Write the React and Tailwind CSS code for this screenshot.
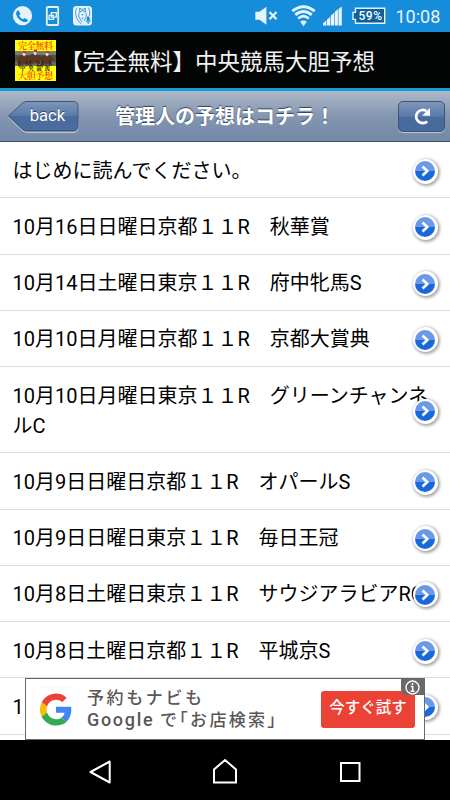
const races = [
  'はじめに読んでください。',
  '10月16日日曜日京都１１R　秋華賞',
  '10月14日土曜日東京１１R　府中牝馬S',
  '10月10日月曜日京都１１R　京都大賞典',
  '10月10日月曜日東京１１R　グリーンチャンネルC',
  '10月9日日曜日京都１１R　オパールS',
  '10月9日日曜日東京１１R　毎日王冠',
  '10月8日土曜日東京１１R　サウジアラビアRC',
  '10月8日土曜日京都１１R　平城京S',
  '1',
]

function StatusBar() {
  return (
    <div className="flex h-8 shrink-0 items-center bg-[#158ddb] text-[#e6f3fb]">
      <svg width="100" height="32" viewBox="0 0 100 32" fill="none">
        <circle cx="22.5" cy="15.7" r="9.6" fill="currentColor" />
        <path d="M18.3 10.2l2.2 3.6-1.3 1.6c.7 1.8 2 3 3.8 3.8l1.6-1.3 3.4 2c-.6 2-2.3 2.6-4.3 2-4-1.2-6.6-4-7.5-7.4-.4-2 .4-3.8 2.1-4.3z" fill="#158ddb" />
        <rect x="46.8" y="7" width="11.4" height="18" rx="1" stroke="currentColor" strokeWidth="1.8" />
        <path d="M51.3 12.7h5v4.5h-5zM49 15.3h4.5v4H49z" stroke="currentColor" strokeWidth="1.3" />
        <rect x="73" y="6" width="19" height="19.5" rx="3.5" fill="currentColor" />
        <path d="M76.8 7.5c-2.4 5-1.4 11 4.7 16.8M79.2 12.5l-.6 3.5 3.4 6.5M88.2 7.5c2 3 2 6 1 8.5M85.8 12.5l.6 3.5-2.4 5" stroke="#158ddb" strokeWidth=".8" />
        <path d="M79.7 8.2l2.8 1.5 2.8-1.5v3.8l-2.8-1.5-2.8 1.5z" stroke="#158ddb" strokeWidth=".9" />
        <path d="M82.5 14v1.3M82.5 17.5v1.3" stroke="#158ddb" strokeWidth="1.4" />
        <rect x="86.7" y="16.5" width="3" height="5" rx="1.2" fill="#158ddb" />
        <path d="M86 20.5c.6 2.8 4 2.8 4.5 0M88.2 22v2" stroke="#158ddb" strokeWidth=".9" />
      </svg>
      <svg className="ml-[150px]" width="136" height="32" viewBox="250 0 136 32" fill="none">
        <path d="M255.3 11.8h4.2l6.9-5v18l-6.9-5h-4.2z" fill="currentColor" />
        <path d="M269.5 12l7 7.3M276.5 12l-7 7.3" stroke="currentColor" strokeWidth="2.2" />
        <path d="M292.3 11.2q11.2-8.8 22.4 0" stroke="currentColor" strokeWidth="2.9" />
        <path d="M295.3 14.9q8.2-6.8 16.4 0" stroke="currentColor" strokeWidth="2.8" />
        <path d="M298.2 18.5q5.3-4.6 10.6 0" stroke="currentColor" strokeWidth="2.6" />
        <path d="M300.2 21.8q3.3-2.7 6.6 0l-3.3 4.4z" fill="currentColor" />
        <path d="M323 25.5v-2.2l3.2-2.7v4.9zM326.8 25.5v-5.8l3.3-2.8v8.6zM330.7 25.5v-9.7l3.3-2.8v12.5zM334.6 25.5V12l3.3-2.7v16.2zM338.5 25.5V9l3.3-2.6v19.1z" fill="currentColor" />
        <path d="M355.5 8.2h29.2v15h-29.2v-3.8H353v-7h2.5z" fill="#0e619a" stroke="currentColor" strokeWidth="1.4" />
        <text x="358.5" y="20.2" fill="white" fontFamily="Roboto" fontSize="12" fontWeight="500" textLength="23.5">59%</text>
      </svg>
      <span className="ml-[9.5px] text-[18px] font-normal">10:08</span>
    </div>
  )
}

// Launcher artwork: yellow captions above and below the horses
function AppIcon() {
  return (
    <svg width="41" height="41" viewBox="0 0 41 41">
      <rect width="41" height="41" fill="#ffff0c" />
      <rect y="11" width="41" height="15" fill="#52523f" />
      <path d="M0 11h41v4H0z" fill="#777c70" />
      <path d="M0 22h41v4H0z" fill="#60745d" />
      {[2, 13, 25].map((x, i) => (
        <g key={x} transform={`translate(${x} ${i === 1 ? 0 : 1})`}>
          <path d="M0 17l4-3 7 1 3 3-3 4-1 4-2-3-4 1-2 3-1-6z" fill="#5a3626" />
          <path d="M5 13l2-1.5 2 2-2 2z" fill="#d7dedb" />
          <path d="M6 10h3v2H6z" fill="#e8281d" />
          <path d="M3 20l-2 4M9 20l3 4" stroke="#241713" />
        </g>
      ))}
      <g fontFamily="'Noto Serif CJK JP', 'Noto Sans CJK JP', serif">
        <text x="3" y="9.2" fontSize="9" fontWeight="500" fill="#f72608" textLength="35">完全無料</text>
        <text x="5" y="30.2" fontSize="5.5" fontWeight="700" fill="#191900" textLength="30">中央競馬</text>
        <text x="3" y="38.7" fontSize="9" fontWeight="500" fill="#f72608" textLength="35">大胆予想</text>
      </g>
    </svg>
  )
}

function NavBar() {
  return (
    <div className="relative flex h-[51px] shrink-0 items-center justify-between border-b border-[#3c4f6c] bg-linear-to-b from-[#adb9c8] via-[#8496b0] via-50% to-[#7188a6] pr-[5px] pl-[7px]">
      <div className="relative flex h-[33px] w-[73px] items-center justify-center">
        <svg className="absolute inset-0" width="73" height="33" viewBox="0 0 73 33">
          <defs>
            <linearGradient id="back" x1="0" y1="0" x2="0" y2="1">
              <stop offset="0" stopColor="#7f96b8" />
              <stop offset=".5" stopColor="#587aaa" />
              <stop offset=".51" stopColor="#486b9e" />
              <stop offset="1" stopColor="#4b6ca0" />
            </linearGradient>
          </defs>
          <path d="M20 2.5h46q5 0 5 5v20q0 5-5 5H20q-3 0-5-2L1.5 17.5 15 4.5q2-2 5-2z" fill="none" stroke="#b7c4d5" />
          <path d="M20 1.5h46q5 0 5 5v19q0 5-5 5H20q-3 0-5-2L1.5 16 15 3.5q2-2 5-2z" fill="url(#back)" stroke="#405576" />
        </svg>
        <span className="relative ml-[8px] mt-px text-[16.6px] text-white [text-shadow:0_-1px_0_#33496a]">back</span>
      </div>
      <h1 className="absolute top-[11.5px] left-[115px] whitespace-nowrap text-[20px] leading-[29px] font-bold text-white [text-shadow:0_-1px_1px_#33415a]">
        管理人の予想はコチラ！
      </h1>
      <div className="flex h-[31px] w-[47px] items-center justify-center rounded-[5px] border border-[#405576] bg-linear-to-b from-[#7f96b8] from-0% via-[#587aaa] via-50% to-[#486b9e] to-52% shadow-[0_1px_0_#b7c4d5]">
        <svg width="18" height="18" viewBox="0 0 18 18" fill="none">
          <path d="M13.6 4.2A6.6 6.6 0 1 0 14.2 14.4" stroke="white" strokeWidth="2.7" />
          <path d="M17 1v7.8H9.2z" fill="white" />
        </svg>
      </div>
    </div>
  )
}

function Chevron() {
  return (
    <span className="absolute top-1/2 right-[12.5px] -mt-[11px] flex size-[25px] items-center justify-center rounded-full bg-white shadow-[1px_1px_3px_1px_#00000059]">
      <span className="flex size-5 items-center justify-center rounded-full bg-linear-to-b from-[#6999e8] from-50% to-[#1969dc] to-50%">
        <svg width="10" height="12" viewBox="0 0 10 12" fill="none">
          <path d="M2.5 1.5L7.3 6l-4.8 4.5" stroke="white" strokeWidth="2.6" />
        </svg>
      </span>
    </span>
  )
}

function AdBanner() {
  return (
    <div className="absolute top-[678px] left-[25px] flex h-[62px] w-[400px] items-center border border-[#626971] bg-white">
      <div className="ml-[7px] flex size-[45px] items-center justify-center rounded-md border border-[#fafafa]">
        <svg width="32" height="33" viewBox="0 0 48 48">
          <path fill="#ea4335" d="M24 9.5c3.54 0 6.71 1.22 9.21 3.6l6.85-6.85C35.9 2.38 30.47 0 24 0 14.62 0 6.51 5.38 2.56 13.22l7.98 6.19C12.43 13.72 17.74 9.5 24 9.5z" />
          <path fill="#4285f4" d="M46.98 24.55c0-1.57-.15-3.09-.38-4.55H24v9.02h12.94c-.58 2.96-2.26 5.48-4.78 7.18l7.73 6c4.51-4.18 7.09-10.36 7.09-17.65z" />
          <path fill="#fbbc05" d="M10.53 28.59A14.4 14.4 0 0 1 9.77 24c0-1.6.27-3.14.76-4.59l-7.98-6.19A23.9 23.9 0 0 0 0 24c0 3.88.92 7.54 2.56 10.78z" />
          <path fill="#34a853" d="M24 48c6.48 0 11.93-2.13 15.89-5.81l-7.73-6c-2.15 1.45-4.92 2.3-8.16 2.3-6.26 0-11.57-4.22-13.47-9.91l-7.98 6.19C6.51 42.62 14.62 48 24 48z" />
        </svg>
      </div>
      <div className="-mt-px ml-[9px] whitespace-nowrap text-[17px] leading-[22px] font-medium text-[#5a5656]">
        <p className="tracking-[2.6px]">予約もナビも</p>
        <p className="flex">
          <span className="w-[73px] text-[18px] tracking-[1.7px]">Google</span>
          <span className="tracking-[2.3px] [font-feature-settings:'halt']">で「お店検索」</span>
        </p>
      </div>
      <div className="ml-auto mr-[9px] flex h-[37px] w-[94px] items-center justify-center rounded-[3px] bg-[#ea4335] text-[15.5px] font-medium text-white">
        今すぐ試す
      </div>
      <div className="absolute top-0 right-0 flex h-4 w-[23px] items-center justify-center rounded-bl-md bg-[#69696b]">
        <svg width="15" height="15" viewBox="0 0 15 15" fill="none" stroke="white">
          <circle cx="7.5" cy="7.5" r="6.5" strokeWidth="1.4" />
          <path d="M7.5 3v2M5.8 6.5h1.9v5M5.5 11.3h4" strokeWidth="1.5" />
        </svg>
      </div>
    </div>
  )
}

export default function App() {
  return (
    <div className="relative flex h-[800px] w-[450px] flex-col overflow-hidden bg-white font-[Roboto,'Noto_Sans_CJK_JP',sans-serif]" lang="ja">
      <StatusBar />
      <header className="flex h-[59px] shrink-0 items-center border-b-[3px] border-[#159bd0] bg-[#030505] pl-[15px]">
        <AppIcon />
        <span className="mt-[4px] ml-[4px] whitespace-nowrap text-[22.5px] leading-none text-[#f1f1f1]">【完全無料】中央競馬大胆予想</span>
      </header>
      <NavBar />

      <ul className="min-h-0 flex-1 overflow-hidden bg-white">
        {races.map(race => (
          <li key={race} className="relative border-b-[1.25px] border-[#dcdcdc] pt-[13.5px] pr-[13px] pb-[11.75px] pl-[12.5px] text-[20px] leading-[30px] break-all text-black">
            {race}
            <Chevron />
          </li>
        ))}
      </ul>

      <AdBanner />

      <nav className="flex h-[60px] shrink-0 items-center bg-black">
        <svg width="450" height="60" viewBox="0 0 450 60" fill="none" stroke="white" strokeWidth="2">
          <path d="M109.7 21.5v21L90.5 32z" strokeLinejoin="round" />
          <path d="M214 42.5V29.5l11-9.5 11 9.5v13z" />
          <rect x="341" y="23" width="18.5" height="18" />
        </svg>
      </nav>
    </div>
  )
}
